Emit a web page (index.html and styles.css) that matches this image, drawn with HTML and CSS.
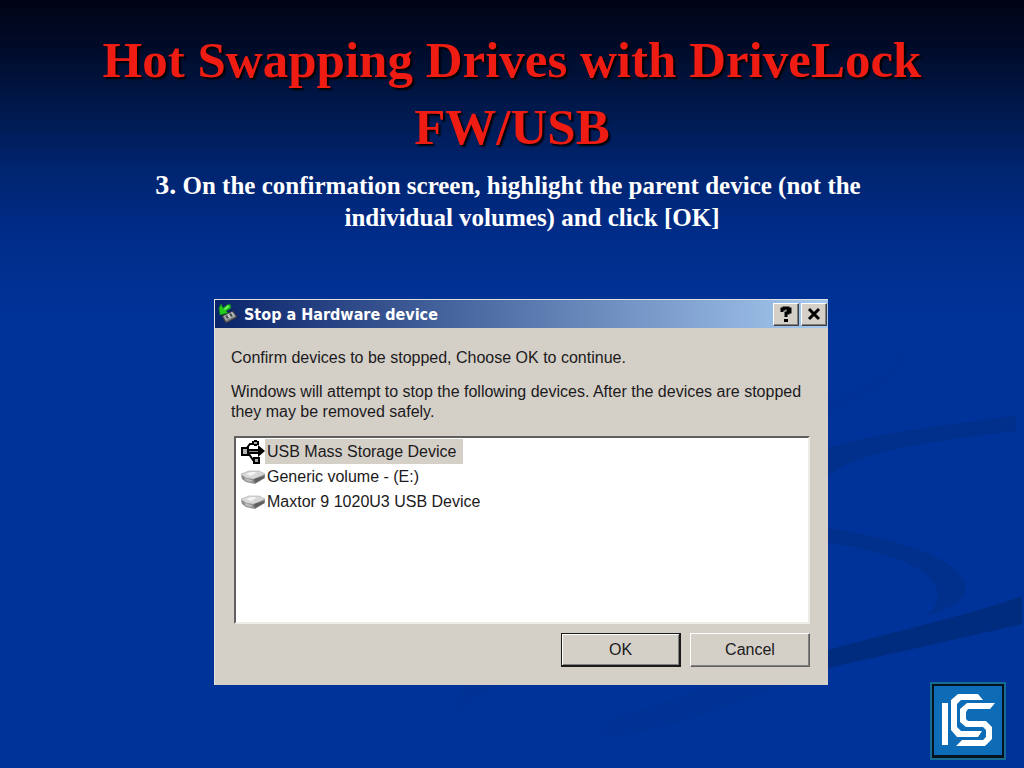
FILE: index.html
```html
<!DOCTYPE html>
<html lang="en">
<head>
    <meta charset="UTF-8">
    <meta name="viewport" content="width=device-width, initial-scale=1.0">
    <title>Hot Swapping Drives with DriveLock FW/USB</title>
    <link rel="stylesheet" href="styles.css">
</head>
<body>
    <svg class="swoosh" viewBox="0 0 1024 768" preserveAspectRatio="none" aria-hidden="true">
        <path fill="#003092" d="M828 400 C868 387 900 368 908 335 C908 365 892 390 828 412Z" opacity=".4"/>
        <path fill="#002f8c" d="M828 448 C880 431 950 426 1016 415 L1016 431 C940 440 865 449 828 475Z"/>
        <path fill="#002f8c" d="M828 528 C878 535 930 550 952 567 C976 588 968 604 926 616 C947 598 938 580 915 567 C890 554 860 548 828 542Z"/>
        <path fill="#002c80" d="M828 650 C895 631 970 615 1022 596 L1022 624 C960 638 895 653 828 668Z"/>
        <path fill="#003092" d="M705 685 L785 685 C735 702 690 724 620 736 C595 738 590 728 610 719 C645 706 680 700 705 685Z" opacity=".7"/>
        <path fill="#003092" d="M466 685 L500 685 C475 697 460 707 456 719 C454 706 458 695 466 685Z" opacity=".5"/>
    </svg>

    <main class="slide">
        <h1 class="slide-title">Hot Swapping Drives with DriveLock<br>FW/USB</h1>
        <p class="step"><span class="step-number">3.</span> On the confirmation screen, highlight the parent device (not the<br>individual volumes) and click [OK]</p>

        <section class="dialog" role="dialog" aria-labelledby="dialogTitle">
            <header class="titlebar">
                <svg class="titlebar-icon" viewBox="0 0 20 22" aria-hidden="true">
                    <path fill="#77797c" stroke="#30343a" stroke-width="1" d="M4 13 L15 8 L19 14 L8 20Z"/>
                    <path fill="#c4c7c6" d="M6 13 L14 9 L17 13 L8 17Z"/>
                    <path fill="#4a4e55" d="M7 13 L9 12 L11 15 L9 16Z M11 11 L13 10 L15 13 L13 14Z"/>
                    <path fill="#25c91e" stroke="#0c7d12" stroke-width=".6" d="M3 1 L5 5 L9 2 L12 1 L13 5 L8 8 L10 10 L2 12 L1 5Z"/>
                    <path fill="#7cf06c" d="M6 6 L10 2 L11 4 L7 7Z"/>
                </svg>
                <h2 id="dialogTitle" class="titlebar-text">Stop a Hardware device</h2>
                <button class="caption-button" type="button" aria-label="Help">
                    <svg viewBox="0 0 14 16" aria-hidden="true">
                        <path fill="none" stroke="#000" stroke-width="3" d="M3 6 V3 H5 V2 H9 V3 H11 V6 H9 V7 H7 V11"/>
                        <path d="M5 13 H9 V16 H5Z"/>
                    </svg>
                </button>
                <button class="caption-button" type="button" aria-label="Close">
                    <svg viewBox="0 0 14 16" aria-hidden="true">
                        <path fill="none" stroke="#000" stroke-width="3" d="M2 3 L12 13 M12 3 L2 13"/>
                    </svg>
                </button>
            </header>

            <div class="dialog-body">
                <p>Confirm devices to be stopped, Choose OK to continue.</p>
                <p>Windows will attempt to stop the following devices. After the devices are stopped they may be removed safely.</p>

                <ul class="device-list">
                    <li class="device selected">
                        <svg class="device-icon" viewBox="0 0 24 24" aria-hidden="true">
                            <path fill="none" stroke="#000" stroke-width="2" d="M5 9 L9 4 H12 M8 14 L12 20 H14"/>
                            <path d="M0 7 H8 V9 H17 V5 L24 11 L17 17 V14 H8 V16 H0Z"/>
                            <path fill="#b4b4b4" d="M2 9 H6 V14 H2Z"/>
                            <path fill="#8a8a8a" d="M8 11 H17 V12 H8Z"/>
                            <path d="M11 1 H13 V0 H16 V1 H18 V5 H16 V6 H13 V5 H11Z"/>
                            <path fill="#aaa" d="M13 2 H16 V4 H13Z"/>
                            <path d="M12 17 H19 V24 H12Z"/>
                            <path fill="#aaa" d="M14 19 H17 V22 H14Z"/>
                        </svg>
                        <span class="device-name">USB Mass Storage Device</span>
                    </li>
                    <li class="device">
                        <svg class="device-icon" viewBox="0 0 24 24" aria-hidden="true">
                            <path fill="#8b8b8b" d="M0 10 L12 14 L24 9 V13 L14 19 L5 17 L1 14Z"/>
                            <path fill="#d8d8d8" stroke="#aaa" stroke-width=".6" d="M0 9 L8 6 H18 L24 9 L13 14 L5 13Z"/>
                            <path fill="#f4f4f4" d="M5 9 L10 7 H16 L10 11Z"/>
                            <path fill="#5d5d5d" d="M13 14 L23 11 V13 L14 18Z"/>
                            <path fill="#bcbcbc" d="M3 13 L11 15 V17 L5 16Z"/>
                        </svg>
                        <span class="device-name">Generic volume - (E:)</span>
                    </li>
                    <li class="device">
                        <svg class="device-icon" viewBox="0 0 24 24" aria-hidden="true">
                            <path fill="#8b8b8b" d="M0 10 L12 14 L24 9 V13 L14 19 L5 17 L1 14Z"/>
                            <path fill="#d8d8d8" stroke="#aaa" stroke-width=".6" d="M0 9 L8 6 H18 L24 9 L13 14 L5 13Z"/>
                            <path fill="#f4f4f4" d="M5 9 L10 7 H16 L10 11Z"/>
                            <path fill="#5d5d5d" d="M13 14 L23 11 V13 L14 18Z"/>
                            <path fill="#bcbcbc" d="M3 13 L11 15 V17 L5 16Z"/>
                        </svg>
                        <span class="device-name">Maxtor 9 1020U3 USB Device</span>
                    </li>
                </ul>

                <div class="actions">
                    <button class="button default" type="button">OK</button>
                    <button class="button" type="button">Cancel</button>
                </div>
            </div>
        </section>
    </main>

    <svg class="logo" viewBox="0 0 76 78" role="img" aria-label="ICS">
        <path fill="#176b91" d="M0 0 H76 V78 H0Z"/>
        <path fill="#06111f" d="M2 2 H74 V76 H2Z"/>
        <path fill="#0d6cb5" d="M4 4 H72 V73 H4Z"/>
        <path fill="#fff" d="M12 21 H18 V63 H12Z"/>
        <path fill="#fff" d="M28 12 H48 L53 18 H31 L27 22 V45 L31 49 H52 L48 55 H27 L21 48 V18Z"/>
        <path fill="#fff" d="M37 21 H65 L60 27 H38 L36 30 V37 L38 39 H56 L62 45 V57 L55 64 H26 L32 58 H53 L56 55 V48 L53 45 H36 L30 40 V27Z"/>
    </svg>
</body>
</html>
```

FILE: styles.css
```css
* {
    box-sizing: border-box;
}

body {
    margin: 0;
    min-height: 100vh;
    position: relative;
    background: linear-gradient(to bottom, #000314 0%, #000c2c 7%, #001a50 15%, #00246f 22%, #002c88 30%, #003399 42%, #003399 100%);
    color: #fff;
    font-family: "Liberation Serif", serif;
}

.swoosh {
    position: absolute;
    top: 0;
    left: 0;
    width: 100%;
    height: 100%;
}

.slide {
    position: relative;
    padding: 27px 0 80px;
}

.slide-title {
    margin: 0;
    color: #ee1c12;
    font-size: 51px;
    line-height: 67px;
    text-align: center;
    text-shadow: 2px 2px 2px #000;
}

.step {
    margin: 8px 0 0;
    padding-left: 40px;
    font-size: 25px;
    font-weight: bold;
    line-height: 32px;
    text-align: center;
    text-indent: -48px;
}

.step-number {
    font-size: 28px;
}

/* Dialog window */
.dialog {
    margin: 65px 196px 0 214px;
    background: #d4d0c8;
    border-top: 1px solid #e4e2dc;
    border-left: 1px solid #e4e2dc;
    color: #1c1a1c;
    font-family: "Liberation Sans", sans-serif;
    font-size: 16px;
}

.titlebar {
    display: flex;
    align-items: center;
    gap: 2px;
    height: 28px;
    padding: 0 1px 0 3px;
    background: linear-gradient(to right, #0a246a, #a6caf0);
}

.titlebar-icon {
    width: 20px;
    height: 22px;
}

.titlebar-text {
    flex: 1;
    margin: 0;
    padding-left: 4px;
    color: #fff;
    font-family: "DejaVu Sans Condensed", "DejaVu Sans", sans-serif;
    font-size: 16px;
    font-weight: bold;
}

.caption-button {
    display: flex;
    align-items: center;
    justify-content: center;
    width: 26px;
    height: 23px;
    padding: 0;
    background: #d4d0c8;
    border: 1px solid;
    border-color: #fff #404040 #404040 #fff;
    box-shadow: inset -1px -1px 0 #808080;
}

.caption-button svg {
    width: 14px;
    height: 16px;
}

.dialog-body {
    padding: 20px 18px 18px 16px;
}

.dialog-body p {
    margin: 0 0 14px;
    line-height: 20px;
}

.device-list {
    height: 188px;
    margin: 0 0 9px 3px;
    padding: 1px 5px;
    list-style: none;
    background: #fff;
    border: 2px solid;
    border-color: #606060 #eeece6 #eeece6 #606060;
}

.device {
    display: flex;
    align-items: center;
    height: 25px;
}

.device-icon {
    width: 24px;
    height: 24px;
}

.device-name {
    padding: 0 7px 0 2px;
    line-height: 25px;
}

.selected .device-name {
    background: #d4d0c8;
}

.actions {
    display: flex;
    justify-content: flex-end;
    gap: 9px;
}

.button {
    width: 120px;
    height: 34px;
    padding: 0;
    background: #d4d0c8;
    border: 1px solid;
    border-color: #fff #606060 #606060 #fff;
    box-shadow: inset -1px -1px 0 #808080;
    color: #1c1a1c;
    font-family: inherit;
    font-size: 16px;
}

.button.default {
    border-width: 1px 2px 2px 1px;
    border-color: #1a1a1a;
    box-shadow: inset 1px 1px 0 #fff, inset -1px -1px 0 #808080;
}

.logo {
    position: absolute;
    right: 18px;
    bottom: 8px;
    width: 76px;
    height: 78px;
}
```
